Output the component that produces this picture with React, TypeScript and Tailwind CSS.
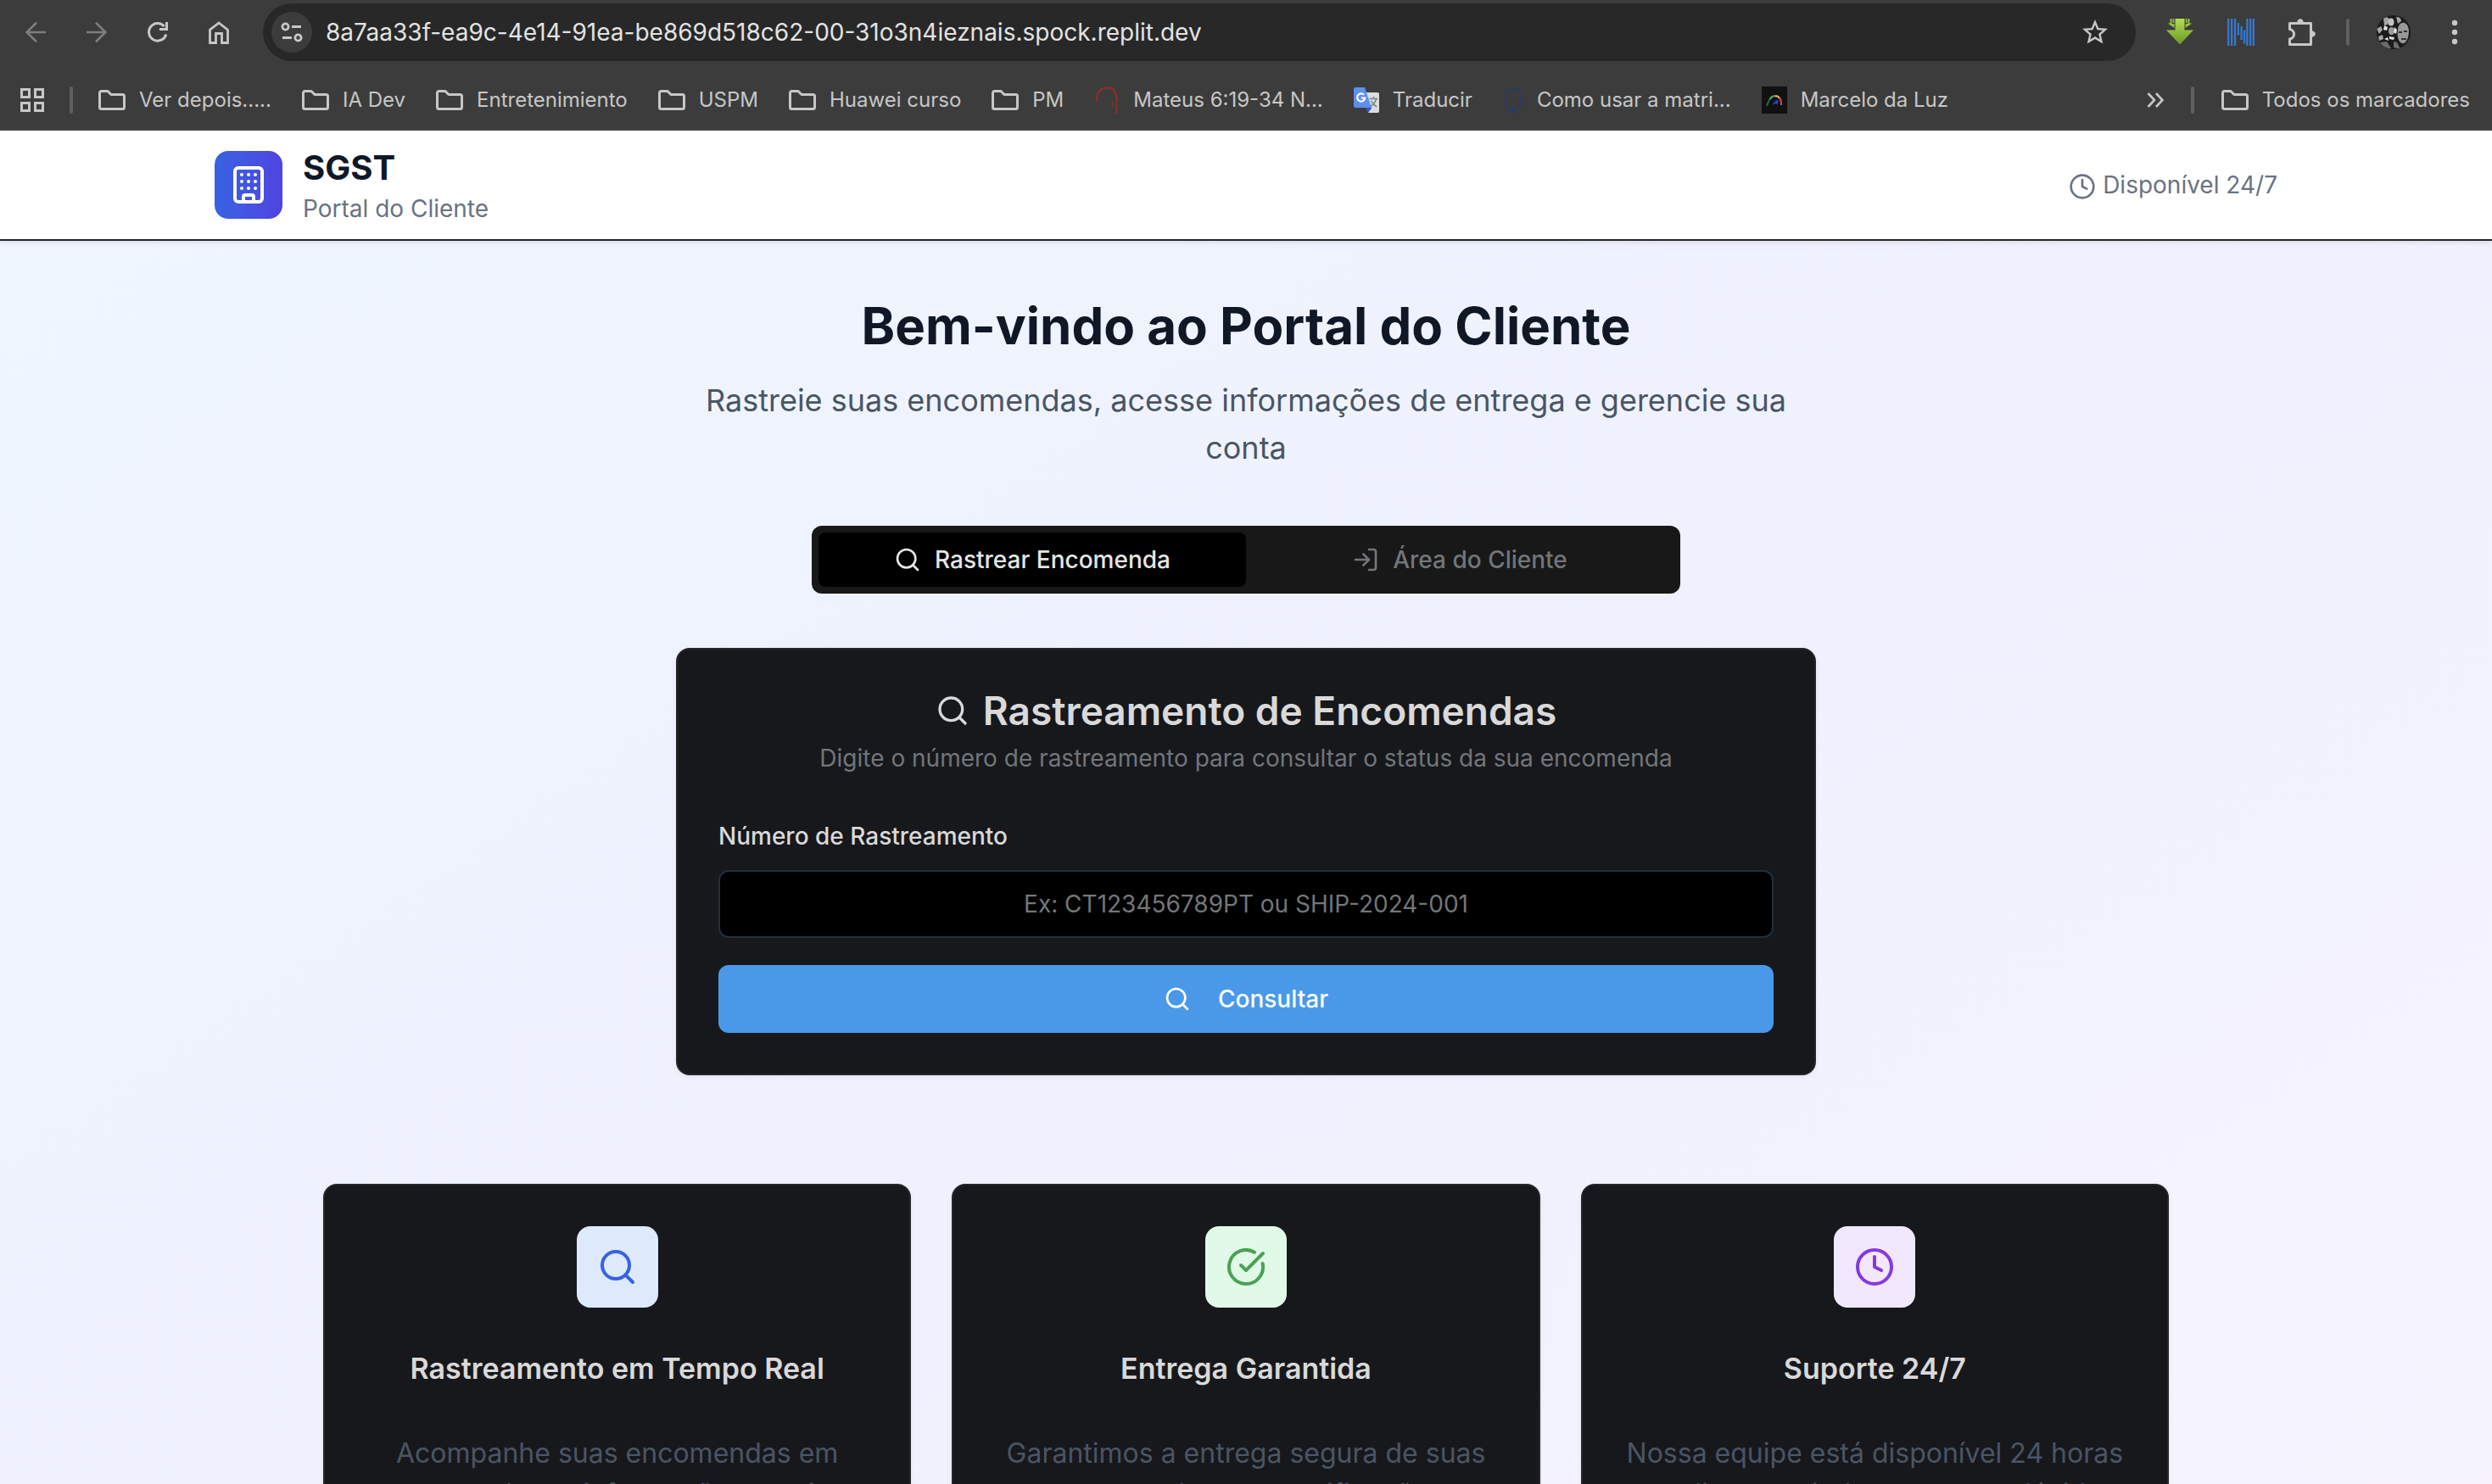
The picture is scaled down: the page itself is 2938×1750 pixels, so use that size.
import type { ReactNode } from "react";
import { Building, CircleCheckBig, Clock, LogIn, Search } from "lucide-react";
import { MdStarBorder } from "react-icons/md";

function BackIcon({ className }: { className?: string }) {
  return (
    <svg viewBox="0 0 32 32" className={className} fill="none" stroke="currentColor" strokeWidth="2.6">
      <path d="M28 16H5.5M17 4.8 5.6 16 17 27.2" />
    </svg>
  );
}

function ReloadIcon() {
  return (
    <svg viewBox="0 0 32 32" className="size-8" fill="none" stroke="currentColor" strokeWidth="3">
      <path d="M25.8 18.5A10.3 10.3 0 1 1 23.6 9" />
      <path d="M26.5 4v8.5H18" />
    </svg>
  );
}

function HomeIcon() {
  return (
    <svg viewBox="0 0 32 32" className="size-8" fill="none" stroke="currentColor" strokeWidth="2.8">
      <path d="M5.5 13.2 16 5l10.5 8.2v15.3h-7v-11h-7v11h-7z" />
    </svg>
  );
}

function TuneIcon() {
  return (
    <svg viewBox="0 0 32 32" className="size-8" fill="none" stroke="currentColor" strokeWidth="2.8">
      <circle cx="8.5" cy="9.5" r="3.6" />
      <path d="M16 9.5h11M5 22.5h11" />
      <circle cx="23.5" cy="22.5" r="3.6" />
    </svg>
  );
}

function DownloadIcon() {
  return (
    <svg viewBox="0 0 32 32" className="size-8">
      <defs>
        <linearGradient id="leaf" x1="0" y1="0" x2="0" y2="1">
          <stop offset="0" stopColor="#b4df4f" />
          <stop offset="1" stopColor="#699729" />
        </linearGradient>
      </defs>
      <path fill="url(#leaf)" d="M10.5 0h11v13.5H32L16 30.5 0 13.5h10.5z" />
      <path fill="#8fbf3c" d="M4.5 0h2v6h3v5L1.5 5.5h3zM27.5 0h-2v6h-3v5l8-5.5h-3zM7.5 0h1.8v5H7.5zM22.7 0h1.8v5h-1.8z" />
    </svg>
  );
}

function BarsNIcon() {
  return (
    <svg viewBox="0 0 32 32" className="size-8" stroke="#3579cf" strokeWidth="2.3">
      <path d="M1.2 0v32M5.1 0v32M9 0v32M12.9 5v14.5M16.6 9v16M20.1 13.5v16M23.4 0v32M27.2 0v32M30.9 0v32" />
    </svg>
  );
}

function PuzzleIcon() {
  return (
    <svg viewBox="0 0 36 36" className="size-9" fill="none" stroke="currentColor" strokeWidth="3" strokeLinejoin="round">
      <path d="M3.5 7.5h25v25h-25V26a5.8 5.8 0 0 0 0-11.5z" />
      <path fill="currentColor" stroke="none" d="M12.2 7a3.8 4.8 0 0 1 7.6 0zM29 16.2a4.8 3.8 0 0 1 0 7.6z" />
    </svg>
  );
}

function Avatar() {
  return (
    <svg viewBox="0 0 40 40" className="size-10">
      <defs>
        <clipPath id="round">
          <circle cx="20" cy="20" r="20" />
        </clipPath>
      </defs>
      <g clipPath="url(#round)">
        <path fill="#1b1b1b" d="M0 0h40v40H0z" />
        <path fill="#a5a5a5" d="M8 4q5-4 7 1l-2 6-4 1zM23 2q6 0 6 5l-4 3zM0 16l5-3 2 4-4 5zM2 25l5-2 1 5-5 2z" />
        <ellipse cx="17" cy="8" rx="3.5" ry="4.5" fill="#c4c4c4" />
        <ellipse cx="17.5" cy="18.5" rx="3.5" ry="4.5" fill="#9d9d9d" />
        <path fill="#e2e2e2" d="M9 12l4 2-1 4-4-1zM21 14l3 3-1 5-3-2zM9 28l4-2 1 4zM15 25l6 1-1 3-5-1z" />
        <path fill="#989898" d="M25 18c0-7 4-10 8-9 5 2 6 10 4 17-2 6-5 9-9 6-3-3-4-8-3-14z" />
        <path fill="#333" d="M26 19h4v2h-4zM32 18h4v2h-4zM29 27h6v2h-6z" />
        <path fill="#6b6b6b" d="M4 32l8-1 5 8-7 1zM20 31l4 1 4 8-8-2z" />
      </g>
    </svg>
  );
}

function AppsIcon() {
  return (
    <svg viewBox="0 0 28 28" className="size-7" fill="none" stroke="currentColor" strokeWidth="3">
      <path d="M1.5 1.5h9v9h-9zM17.5 1.5h9v9h-9zM1.5 17.5h9v9h-9zM17.5 17.5h9v9h-9z" />
    </svg>
  );
}

function FolderIcon() {
  return (
    <svg viewBox="0 0 32 24" className="h-6 w-8" fill="none" stroke="currentColor" strokeWidth="3" strokeLinejoin="round">
      <path d="M1.5 3.5a2 2 0 0 1 2-2H11l4 4h13.5a2 2 0 0 1 2 2v13a2 2 0 0 1-2 2h-25a2 2 0 0 1-2-2z" />
    </svg>
  );
}

function ArcIcon() {
  return (
    <svg viewBox="1 0 30 32" className="h-8 w-[30px]" fill="none" stroke="#86302a" strokeWidth="2.4" strokeLinecap="round">
      <path d="M4 17C3 7 10 1.500 16 1.500c8 0 11.5 6 11.5 15V31" />
      <path d="M22.2 19.5l.3 3" />
    </svg>
  );
}

function TranslateIcon() {
  return (
    <svg viewBox="1 0 30 32" className="h-8 w-[30px]">
      <path fill="#dcdcdc" d="M14 7h15a2 2 0 0 1 2 2v20a2 2 0 0 1-2 2H18z" />
      <path fill="#3a53c4" d="M15 25h7.5L18 31z" />
      <path fill="#5e8ff0" d="M3 1h11l8 24H3a2 2 0 0 1-2-2V3a2 2 0 0 1 2-2z" />
      <path fill="none" stroke="#6f8790" strokeWidth="1.6" d="M19.5 14.5h10M24.5 12v2.5M27.5 14.5q-1.5 5.5-6.5 9M21.500 17q2 4 6.5 7" />
      <path fill="none" stroke="#fff" strokeWidth="2.2" d="M13 9.7a4.6 4.6 0 1 0 1.3 3.8H9.8" />
    </svg>
  );
}

function BadgeIcon() {
  return (
    <svg viewBox="0 0 24 32" className="h-8 w-6" fill="none" stroke="#263b66" strokeWidth="2">
      <path d="M4 9c0-4 2-6 5-6h6c3 0 5 2 5 6M4 12v9c0 3 2 5 4 5h8c2 0 4-2 4-5v-9" />
      <path fill="#263b66" d="M9 27h6l-2.5 3.5h-1z" />
    </svg>
  );
}

function RainbowIcon() {
  return (
    <svg viewBox="1 0 30 32" className="h-8 w-[30px]" fill="none" strokeWidth="2">
      <path fill="#111" d="M0 0h32v32H0z" />
      <path stroke="#2c6b41" d="M7 23c1-3 2-6 3.5-8" />
      <path stroke="#58b56b" d="M10.5 15c1.5-2.2 3-3.5 5-4" />
      <path stroke="#f0b26a" d="M16 11.5c3-1 5 .5 6 2.5" />
      <path stroke="#e04b43" d="M22.5 13.5c1.5 3 1.8 5 1.5 8.5" />
      <path stroke="#2743d8" d="M15 21c1.5-2 2.5-4 4.5-4l-1 4" />
    </svg>
  );
}

function ChevronsIcon() {
  return (
    <svg viewBox="0 0 20 20" className="size-5" fill="none" stroke="currentColor" strokeWidth="2.6">
      <path d="M1.5 2l7.5 8-7.5 8M11 2l7.5 8-7.5 8" />
    </svg>
  );
}

function Divider() {
  return <span className="h-8 w-1 rounded-full bg-[#5f5f5f]" />;
}

function IconButton({ label, children }: { label: string; children: ReactNode }) {
  return (
    <button type="button" aria-label={label} className="flex w-10 items-center justify-center">
      {children}
    </button>
  );
}

const bookmarks: { title: string; icon: ReactNode }[] = [
  { title: "Ver depois.....", icon: <FolderIcon /> },
  { title: "IA Dev", icon: <FolderIcon /> },
  { title: "Entretenimiento", icon: <FolderIcon /> },
  { title: "USPM", icon: <FolderIcon /> },
  { title: "Huawei curso", icon: <FolderIcon /> },
  { title: "PM", icon: <FolderIcon /> },
  { title: "Mateus 6:19-34 N...", icon: <ArcIcon /> },
  { title: "Traducir", icon: <TranslateIcon /> },
  { title: "Como usar a matri...", icon: <BadgeIcon /> },
  { title: "Marcelo da Luz", icon: <RainbowIcon /> },
];

function Bookmark({ title, icon }: { title: string; icon: ReactNode }) {
  return (
    <a href="#" className="flex items-center gap-4 whitespace-nowrap">
      {icon}
      {title}
    </a>
  );
}

function BrowserBar() {
  return (
    <div className="shrink-0 border-b-2 border-[#444444] bg-[#3c3c3c] text-[#c7c7c7]">
      <div className="flex h-[76px] items-center pr-6 pl-[22px]">
        <div className="flex gap-8">
          <IconButton label="Voltar">
            <BackIcon className="size-8 text-[#7d7d7d]" />
          </IconButton>
          <IconButton label="Avançar">
            <BackIcon className="size-8 rotate-180 text-[#7d7d7d]" />
          </IconButton>
          <IconButton label="Recarregar">
            <ReloadIcon />
          </IconButton>
          <IconButton label="Página inicial">
            <HomeIcon />
          </IconButton>
        </div>
        <div className="ml-8 flex h-[68px] flex-1 items-center gap-4 rounded-full bg-[#282828] pr-[30px] pl-[10px]">
          <button type="button" aria-label="Informações do site" className="flex size-12 items-center justify-center rounded-full bg-[#3c3c3c]">
            <TuneIcon />
          </button>
          <input
            aria-label="Endereço"
            defaultValue="8a7aa33f-ea9c-4e14-91ea-be869d518c62-00-31o3n4ieznais.spock.replit.dev"
            className="min-w-0 flex-1 bg-transparent text-[28px] text-[#e3e3e3] outline-none"
          />
          <button type="button" aria-label="Adicionar aos favoritos">
            <MdStarBorder className="size-9" />
          </button>
        </div>
        <div className="ml-8 flex items-center gap-8">
          <IconButton label="Baixar">
            <DownloadIcon />
          </IconButton>
          <IconButton label="Extensão N">
            <BarsNIcon />
          </IconButton>
          <IconButton label="Extensões">
            <PuzzleIcon />
          </IconButton>
          <Divider />
          <IconButton label="Perfil">
            <Avatar />
          </IconButton>
          <IconButton label="Menu">
            <svg viewBox="0 0 8 32" className="h-8 w-2" fill="currentColor">
              <circle cx="4" cy="5" r="3.2" />
              <circle cx="4" cy="16" r="3.2" />
              <circle cx="4" cy="27" r="3.2" />
            </svg>
          </IconButton>
        </div>
      </div>
      <div className="flex h-[76px] items-center pt-2 pr-[26px] pl-6 text-[24px]">
        <div className="flex items-center gap-[30px]">
          <button type="button" aria-label="Aplicativos">
            <AppsIcon />
          </button>
          <Divider />
          <nav aria-label="Favoritos" className="flex items-center gap-9">
            {bookmarks.map((b) => (
              <Bookmark key={b.title} {...b} />
            ))}
          </nav>
        </div>
        <div className="ml-auto flex items-center gap-8">
          <button type="button" aria-label="Mais favoritos">
            <ChevronsIcon />
          </button>
          <Divider />
          <Bookmark title="Todos os marcadores" icon={<FolderIcon />} />
        </div>
      </div>
    </div>
  );
}

function SiteHeader() {
  return (
    <header className="relative border-b-2 border-[#242628] bg-white shadow-[0_2px_6px_rgba(0,0,0,0.1)]">
      <div className="mx-auto flex max-w-[2560px] items-center justify-between px-16 py-4">
        <div className="flex items-center gap-6">
          <div className="flex size-20 items-center justify-center rounded-2xl bg-linear-to-r from-[#3662e3] to-[#4f44e0] text-white">
            <Building className="size-12" />
          </div>
          <div>
            <div className="text-[40px] leading-14 font-bold text-gray-900">SGST</div>
            <div className="text-[28px] leading-10 text-gray-500">Portal do Cliente</div>
          </div>
        </div>
        <div className="text-[28px] leading-10 text-gray-500">
          <Clock className="mr-2 inline size-8 align-middle" />
          Disponível 24/7
        </div>
      </div>
    </header>
  );
}

function TrackingCard() {
  return (
    <section className="mx-auto mt-16 max-w-[1344px] rounded-2xl border-2 border-[#242628] bg-[#17181c] shadow-[0_2px_6px_rgba(0,0,0,0.06)]">
      <div className="flex flex-col items-center gap-3 p-12">
        <h2 className="flex items-center gap-4 text-[46px] leading-12 font-semibold text-[#d9d9d9]">
          <Search className="size-10" />
          Rastreamento de Encomendas
        </h2>
        <p className="text-[28px] leading-10 text-[#72767a]">
          Digite o número de rastreamento para consultar o status da sua encomenda
        </p>
      </div>
      <form className="flex flex-col px-12 pb-12 text-[28px]" onSubmit={(e) => e.preventDefault()}>
        <label htmlFor="tracking" className="leading-12 font-medium text-[#d9d9d9]">
          Número de Rastreamento
        </label>
        <input
          id="tracking"
          type="text"
          placeholder="Ex: CT123456789PT ou SHIP-2024-001"
          className="mt-4 h-20 rounded-xl border-2 border-[#22303c] bg-black px-6 text-center text-[#d9d9d9] outline-none placeholder:text-[#72767a]"
        />
        <button
          type="submit"
          className="mt-8 flex h-20 items-center justify-center gap-8 rounded-xl bg-[#4a99e9] font-medium text-white"
        >
          <Search className="size-8" />
          Consultar
        </button>
      </form>
    </section>
  );
}

const features = [
  {
    title: "Rastreamento em Tempo Real",
    text: "Acompanhe suas encomendas em tempo real com informações precisas",
    tile: "bg-[#dee9fb] text-[#3662e3]",
    Icon: Search,
  },
  {
    title: "Entrega Garantida",
    text: "Garantimos a entrega segura de suas encomendas com notificações",
    tile: "bg-[#e1fae8] text-[#4ba154]",
    Icon: CircleCheckBig,
  },
  {
    title: "Suporte 24/7",
    text: "Nossa equipe está disponível 24 horas por dia para ajudar com suas dúvidas",
    tile: "bg-[#f1e8fd] text-[#8639df]",
    Icon: Clock,
  },
];

export default function App() {
  return (
    <div className="flex h-screen flex-col overflow-hidden font-['Inter',sans-serif]">
      <BrowserBar />
      <div className="flex-1 overflow-hidden">
        <div className="bg-linear-to-br from-[#eff6ff] via-[#eff1fe] to-[#f8f4ff] pb-64">
          <SiteHeader />
          <main className="mx-auto max-w-[2304px] px-16 py-16">
            <div className="mx-auto max-w-[1344px] text-center">
              <h1 className="text-[60px] leading-[72px] font-bold text-gray-900">Bem-vindo ao Portal do Cliente</h1>
              <p className="mt-6 text-[36px] leading-14 text-gray-600">
                Rastreie suas encomendas, acesse informações de entrega e gerencie sua conta
              </p>
            </div>
            <div
              role="tablist"
              className="mx-auto mt-16 grid h-20 max-w-[1024px] grid-cols-2 rounded-xl bg-[#181818] p-2 text-[28px] font-medium"
            >
              <button
                type="button"
                role="tab"
                aria-selected="true"
                className="flex items-center justify-center gap-4 rounded-lg bg-black text-[#e5e6e4]"
              >
                <Search className="size-8" />
                Rastrear Encomenda
              </button>
              <button
                type="button"
                role="tab"
                aria-selected="false"
                className="flex items-center justify-center gap-4 rounded-lg text-[#72767a]"
              >
                <LogIn className="size-8" />
                Área do Cliente
              </button>
            </div>
            <TrackingCard />
            <div className="mt-32 grid grid-cols-3 gap-12">
              {features.map(({ title, text, tile, Icon }) => (
                <article
                  key={title}
                  className="rounded-2xl border-2 border-[#242628] bg-[#17181c] p-12 text-center shadow-[0_2px_6px_rgba(0,0,0,0.06)]"
                >
                  <div className={`mx-auto flex size-24 items-center justify-center rounded-2xl ${tile}`}>
                    <Icon className="size-12" />
                  </div>
                  <h3 className="mt-11 text-[34px] leading-14 font-semibold text-[#d9d9d9]">{title}</h3>
                  <p className="mt-12 text-[32px] leading-12 text-gray-600">{text}</p>
                </article>
              ))}
            </div>
          </main>
        </div>
      </div>
    </div>
  );
}
